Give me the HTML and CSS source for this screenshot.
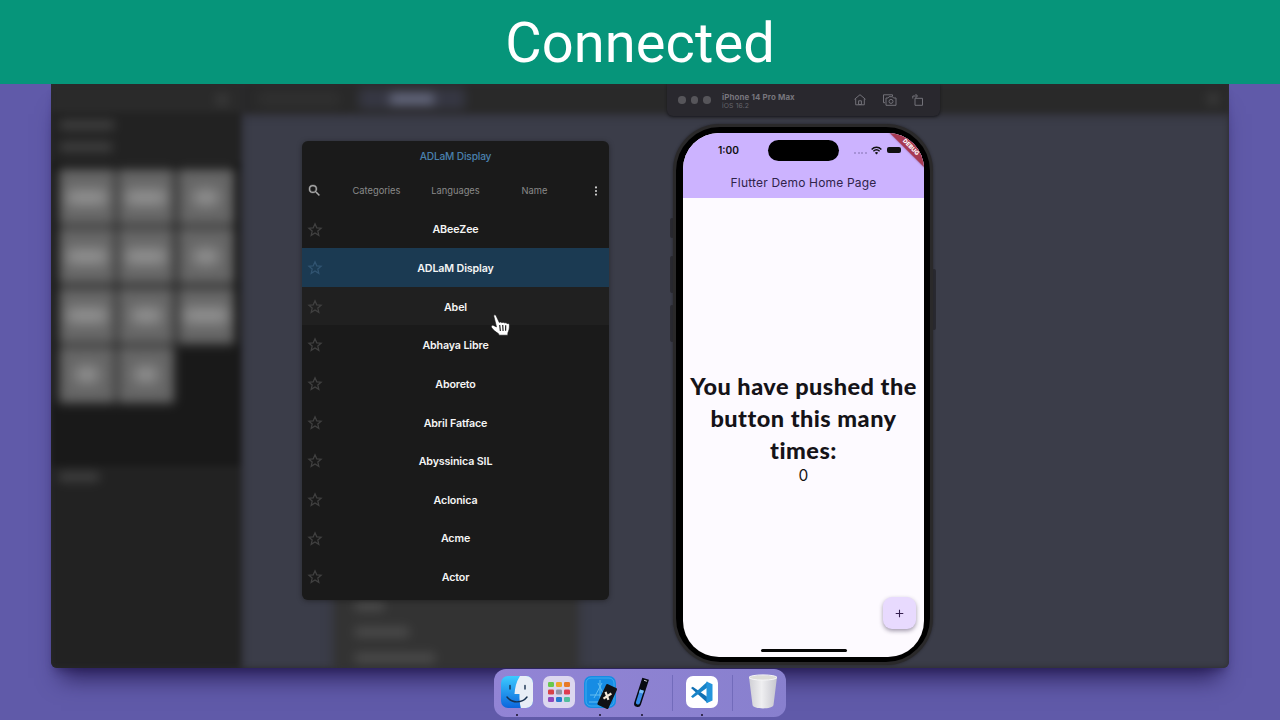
FILE: index.html
```html
<!DOCTYPE html>
<html lang="en">
<head>
<meta charset="utf-8">
<title>Connected</title>
<link rel="stylesheet" href="styles.css">
</head>
<body>
<svg width="0" height="0" class="defs">
  <symbol id="star" viewBox="0 0 24 24"><path d="M12 2.800l2.800 6.500 7 .6-5.300 4.600 1.600 6.900-6.100-3.700-6.100 3.700 1.600-6.900L2.200 9.900l7-.6z" fill="none" stroke="currentColor" stroke-width="2"/></symbol>
</svg>
<header class="banner">Connected</header>
<main class="desktop">
  <section class="editor">
    <div class="backdrop">
      <aside class="sidebar">
        <div class="side-top"><i class="smudge side-icon"></i></div>
        <div class="side-sections"><i class="smudge"></i><i class="smudge"></i></div>
        <div class="tile-panel">
          <div class="tiles">
            <i class="w40"></i><i class="w40"></i><i class="w24"></i>
            <i class="w40"></i><i class="w40"></i><i class="w24"></i>
            <i class="w40"></i><i class="w28"></i><i class="w44"></i>
            <i class="w22"></i><i class="w22"></i>
          </div>
        </div>
        <div class="side-bottom"><i class="smudge"></i></div>
      </aside>
      <div class="workspace">
        <div class="tabs"><i class="tab"></i><i class="tab active"></i><i class="smudge tab-end"></i></div>
        <div class="menu"><i class="smudge m1"></i><i class="smudge m2"></i><i class="smudge m3"></i></div>
      </div>
    </div>
  </section>

  <section class="fonts">
    <div class="current">ADLaM Display</div>
    <nav class="filters">
      <svg class="search" viewBox="0 0 24 24"><path d="M15.500 14h-.79l-.28-.27A6.470 6.470 0 0 0 16 9.500 6.500 6.500 0 1 0 9.500 16c1.610 0 3.090-.59 4.230-1.570l.27.28v.79l5 4.990L20.490 19zm-6 0a4.500 4.500 0 1 1 0-9 4.500 4.500 0 0 1 0 9z" fill="currentColor" stroke="currentColor" stroke-width=".5"/></svg>
      <span>Categories</span><span>Languages</span><span>Name</span>
      <svg class="more" viewBox="0 0 12 12"><g fill="currentColor"><circle cx="6" cy="1.700" r="1.300"/><circle cx="6" cy="6" r="1.300"/><circle cx="6" cy="10.300" r="1.300"/></g></svg>
    </nav>
    <ul class="list">
      <li><svg><use href="#star"/></svg>ABeeZee</li>
      <li class="selected"><svg><use href="#star"/></svg>ADLaM Display</li>
      <li class="hover"><svg><use href="#star"/></svg>Abel</li>
      <li><svg><use href="#star"/></svg>Abhaya Libre</li>
      <li><svg><use href="#star"/></svg>Aboreto</li>
      <li><svg><use href="#star"/></svg>Abril Fatface</li>
      <li><svg><use href="#star"/></svg>Abyssinica SIL</li>
      <li><svg><use href="#star"/></svg>Aclonica</li>
      <li><svg><use href="#star"/></svg>Acme</li>
      <li><svg><use href="#star"/></svg>Actor</li>
    </ul>
  </section>

  <svg class="pointer" viewBox="0 0 19 22"><path d="M2.800 2.200C2.500.9 4.300.3 5 1.500l3.300 7c.8-.8 2.100-.6 2.600.3.700-.8 2.200-.7 2.700.3.800-.7 2.200-.4 2.500.6 1-.5 2.200-.2 2.300 1.100.1 3.200-.3 5.700-1.500 8l-.1 2.400H8l-.5-1.500C5 18 2.500 16.500.6 13.600c-.9-1.500.4-2.800 1.900-2.200l3 1.500z" fill="#fff" stroke="#111" stroke-width=".6"/><path d="M8.700 11l.7 6M11.700 11l.4 6M14.700 11.300l-.1 5.500" stroke="#222" stroke-width="1.200" fill="none"/></svg>

  <section class="simbar">
    <div class="lights"><i></i><i></i><i></i></div>
    <div class="device"><b>iPhone 14 Pro Max</b><span>iOS 16.2</span></div>
    <svg viewBox="0 0 14 14"><path d="M1.500 6.300L7 1.700l5.500 4.600M2.700 5.800v6h8.600v-6M5.600 11.500V7.800h2.800v3.700z"/></svg>
    <svg class="shot" viewBox="0 0 16 14"><path d="M3 9.700H1.500V1.800h9v1.500M4 5h2l1-1.300h3.500L11.500 5H14v7.300H4z"/><circle cx="9" cy="8.400" r="2"/></svg>
    <svg viewBox="0 0 14 14"><path d="M4 5.300h7.500v7H4zM1.800 5.500V3h4M4.500 1l2 2-2 2"/></svg>
  </section>

  <section class="phone">
    <i class="key k1"></i><i class="key k2"></i><i class="key k3"></i><i class="key k4"></i>
    <div class="bezel">
      <div class="screen">
        <div class="appbar">
          <div class="status">
            <b>1:00</b><i class="island"></i>
            <div class="signals">
              <span class="dots"><i></i><i></i><i></i><i></i></span>
              <svg viewBox="0 0 12 9"><g fill="none" stroke="#111" stroke-width="1.600"><path d="M.7 3.300c3-3 7.600-3 10.600 0M2.600 5.300c2-1.900 4.800-1.900 6.800 0"/></g><path d="M4.200 6.900c1-.9 2.600-.9 3.600 0L6 8.800z" fill="#111"/></svg>
              <i class="battery"></i>
            </div>
          </div>
          <div class="title">Flutter Demo Home Page</div>
          <div class="ribbon">DEBUG</div>
        </div>
        <div class="body">
          <p class="message">You have pushed the<br>button this many<br>times:</p>
          <p class="count">0</p>
        </div>
        <div class="foot">
          <div class="fab"><svg viewBox="0 0 10 10"><path d="M5 .8v8.400M.8 5h8.400" stroke="#35204f" stroke-width="1.200"/></svg></div>
          <i class="home"></i>
        </div>
      </div>
    </div>
  </section>

  <section class="dock">
    <div class="app running">
      <svg viewBox="0 0 32 32"><defs><linearGradient id="fb" x2="0" y2="1"><stop stop-color="#3ccbff"/><stop offset="1" stop-color="#0b65dc"/></linearGradient><clipPath id="fc"><rect width="32" height="32" rx="7"/></clipPath></defs><g clip-path="url(#fc)"><rect width="32" height="32" fill="url(#fb)"/><path d="M19 0C15 6 14 12 13.500 18h5c-.2 5 .2 9 1.300 14H32V0z" fill="#e8eef6"/></g><path d="M9 9.500v3.500M24 9.500v3.500M6 21c5 6.500 15 6.500 20 0" fill="none" stroke="#16304e" stroke-width="1.400" stroke-linecap="round"/></svg>
    </div>
    <div class="app">
      <svg viewBox="0 0 32 32"><rect width="32" height="32" rx="7" fill="#dcd7ef"/><g><rect x="5" y="6" width="6" height="5" rx="1.300" fill="#68c84e"/><rect x="13" y="6" width="6" height="5" rx="1.300" fill="#efa52d"/><rect x="21" y="6" width="6" height="5" rx="1.300" fill="#e77928"/><rect x="5" y="13.500" width="6" height="5" rx="1.300" fill="#d74348"/><rect x="13" y="13.500" width="6" height="5" rx="1.300" fill="#9293a5"/><rect x="21" y="13.500" width="6" height="5" rx="1.300" fill="#df3d52"/><rect x="5" y="21" width="6" height="5" rx="1.300" fill="#8f48bd"/><rect x="13" y="21" width="6" height="5" rx="1.300" fill="#247bd0"/><rect x="21" y="21" width="6" height="5" rx="1.300" fill="#52bf9d"/></g></svg>
    </div>
    <div class="app running">
      <svg viewBox="0 0 32 32"><rect width="32" height="32" rx="7" fill="#168ce4"/><rect x="2" y="2" width="28" height="28" rx="5" fill="none" stroke="#50b8f5" stroke-width=".7"/><path d="M10 22L18 7M14 7l8 16M6 19h18M5 26h16M16 4v24" stroke="#62bdf0" stroke-width="1" fill="none"/><g transform="rotate(25 23 21)"><rect x="17" y="9" width="12" height="23" rx="1.500" fill="#101216"/><path d="M19.500 17l6 6M25.500 16l-5 8" stroke="#f4e8d8" stroke-width="2.200"/></g></svg>
    </div>
    <div class="app running">
      <svg viewBox="0 0 32 32"><g transform="rotate(18 15 17)"><path d="M11.500 2h7v26a3.500 3.500 0 0 1-7 0z" fill="#080b12"/><path d="M13 14h4v13a2 2 0 0 1-4 0z" fill="#388be5"/><path d="M13 14h4v3h-4z" fill="#7ec0f6"/><path d="M14 4h3" stroke="#dcdce4" stroke-width=".9"/></g></svg>
    </div>
    <i class="rule r1"></i>
    <div class="app running">
      <svg viewBox="0 0 32 32"><rect width="32" height="32" rx="7" fill="#fff"/><path d="M5 12l1.800-1.300L21.500 21v6z" fill="#1070b3"/><path d="M5 20.500l1.800 1.500L21.500 11.500v-6z" fill="#1884c8"/><path d="M20.500 5.500l6 2.700v16.300l-6 2.700z" fill="#2495dc"/></svg>
    </div>
    <i class="rule r2"></i>
    <div class="app trash">
      <svg viewBox="0 0 32 36"><defs><linearGradient id="tg"><stop stop-color="#cfcfd4"/><stop offset=".45" stop-color="#efeff1"/><stop offset="1" stop-color="#c6c6ce"/></linearGradient></defs><path d="M2 3l3.500 28c.5 4.500 20.500 4.500 21 0L30 3z" fill="url(#tg)"/><ellipse cx="16" cy="3.500" rx="14" ry="2.600" fill="#deded9" stroke="#f5f5f7"/></svg>
    </div>
  </section>
</main>
</body>
</html>
```
FILE: styles.css
```css
* { box-sizing: border-box; }
body { margin: 0; width: 1280px; height: 720px; overflow: hidden; display: flex; flex-direction: column; background: #605aa9; font-family: Inter, "Liberation Sans", sans-serif; }
p, ul { margin: 0; padding: 0; }
i { display: block; }
svg { display: block; }
.defs { position: absolute; }
.banner { height: 84px; flex: none; background: #06957a; color: #fff; font: 400 56px/86px Roboto, sans-serif; letter-spacing: .1px; text-align: center; position: relative; z-index: 5; }
.desktop { position: relative; flex: 1; background: #605aa9; }

.editor { width: 1178px; height: 584px; margin: 0 auto; border-radius: 0 0 6px 6px; overflow: hidden; background: #2a2a2d; box-shadow: 0 20px 22px -10px rgba(25, 15, 65, .75), 0 6px 8px -4px rgba(25, 15, 65, .4); }
.backdrop { height: 584px; display: flex; background: #3b3d49; filter: blur(3px); }
.sidebar { width: 190px; display: flex; flex-direction: column; position: relative; z-index: 1; box-shadow: 0 0 6px 1px #2a2a30; background: #222; }
.side-top { height: 28px; background: #2a2a2a; padding: 10px 13px; display: flex; justify-content: flex-end; }
.smudge { background: #5a5a5a; filter: blur(4px); opacity: .65; }
.side-icon { width: 12px; height: 11px; opacity: .35; }
.side-sections { height: 51px; padding: 9px 9px; display: flex; flex-direction: column; gap: 14px; }
.side-sections .smudge { width: 54px; height: 8px; }
.side-sections .smudge:last-child { width: 52px; }
.tile-panel { height: 303px; background: #191919; padding: 6px 8px; }
.tiles { display: grid; grid-template-columns: repeat(3, 56px); grid-auto-rows: 56px; gap: 3.300px; filter: blur(4px); }
.tiles i { background: #666; display: flex; align-items: center; justify-content: center; }
.tiles i::before { content: ""; height: 15px; width: 40px; background: #949494; filter: blur(4px); }
.tiles .w22::before { width: 22px; }
.tiles .w24::before { width: 24px; }
.tiles .w28::before { width: 29px; }
.tiles .w44::before { width: 44px; }
.side-bottom { padding: 7px 8px; }
.side-bottom .smudge { width: 40px; height: 8px; }
.workspace { flex: 1; display: flex; flex-direction: column; justify-content: space-between; }
.tabs { height: 29px; background: #292929; box-shadow: 0 1px 6px 2px #302f36; display: flex; align-items: center; padding: 0 10px 0 18px; }
.tab { width: 80px; height: 14px; margin-right: 20px; background: #303030; filter: blur(4px); }
.tab.active { width: 106px; height: 21px; background: #363743; display: flex; align-items: center; justify-content: center; }
.tab.active::before { content: ""; width: 44px; height: 10px; background: #6a6e84; }
.tab-end { width: 12px; height: 12px; margin-left: auto; opacity: .35; }
.menu { width: 240px; height: 90px; margin-left: 95px; background: #333; box-shadow: 0 0 8px 4px #353539; padding: 23px 19px; display: flex; flex-direction: column; gap: 16px; }
.menu .smudge { height: 10px; flex: none; }
.m1 { width: 29px; }
.m2 { width: 54px; }
.m3 { width: 80px; }

.fonts { position: absolute; left: 302px; top: 57px; width: 307px; height: 459px; background: #1a1a1a; border-radius: 6px; overflow: hidden; box-shadow: 0 1px 5px rgba(20, 20, 20, .5); }
.current { height: 31px; line-height: 31px; text-align: center; font-size: 10.200px; font-weight: 500; color: #4a81ae; letter-spacing: -.18px; }
.filters { height: 37px; display: grid; grid-template-columns: 35px 79px 79px 79px 35px; align-items: center; text-align: center; color: #8a8a8a; font-size: 9.300px; }
.search { width: 15px; height: 15px; margin-left: 5px; color: #aaa; }
.more { width: 12px; height: 10px; margin-left: 16px; color: #ccc; }
.list { list-style: none; padding-top: .5px; }
.list li { position: relative; height: 38.650px; padding-top: 2px; display: flex; align-items: center; justify-content: center; color: #f5f5f5; font-size: 10.700px; font-weight: 600; letter-spacing: -.14px; }
.list svg { position: absolute; left: 5px; top: 12px; width: 16px; height: 15px; color: #404040; }
.list .selected { background: #1b3a52; }
.list .selected svg { color: #315471; }
.list .hover { background: #202020; }
.pointer { position: absolute; left: 491px; top: 230px; width: 19px; height: 22px; z-index: 3; }

.simbar { position: absolute; left: 667px; top: 0; width: 273px; height: 32px; border-radius: 0 0 6px 6px; background: #29282e; box-shadow: 0 1px 3px #17171c; display: flex; align-items: center; padding: 0 15px 0 11px; color: #77767d; }
.simbar svg { width: 14px; height: 14px; fill: none; stroke: #727178; stroke-width: 1; }
.simbar svg.shot { width: 16px; height: 14px; margin: 0 13px 0 15px; }
.lights { display: flex; gap: 5px; width: 44px; }
.lights i { width: 7.500px; height: 7.500px; border-radius: 50%; background: #56555a; }
.device { flex: 1; font-size: 7.900px; line-height: 9px; padding-top: 2px; display: flex; flex-direction: column; letter-spacing: .14px; }
.device span { font-size: 6.800px; line-height: 8px; color: #66656c; }

.phone { position: absolute; left: 673px; top: 40px; width: 260px; height: 541px; }
.bezel { position: relative; height: 541px; border-radius: 47px; border: 3px solid #2a292a; background: #000; padding: 6px 6px 5px 7px; box-shadow: 0 0 3px #232329; display: flex; }
.key { position: absolute; width: 4px; background: #2a2a31; border-radius: 2px; }
.k1 { left: -3px; top: 94px; height: 20px; }
.k2 { left: -3px; top: 132px; height: 37px; }
.k3 { left: -3px; top: 181px; height: 37px; }
.k4 { right: -3px; top: 145px; height: 61px; }
.screen { position: relative; flex: 1; border-radius: 36px; overflow: hidden; background: #fdfaff; display: flex; flex-direction: column; color: #111; }
.appbar { position: relative; height: 65px; background: #ccb3ff; overflow: hidden; }
.status { height: 34px; display: grid; grid-template-columns: 85px 71px 1fr; align-items: center; }
.status b { font-size: 10.200px; font-weight: 600; padding-left: 35px; }
.island { height: 21px; background: #000; border-radius: 11px; }
.signals { display: flex; align-items: center; padding-left: 15px; }
.dots { display: flex; gap: 1.500px; width: 17px; padding-top: 5px; }
.dots i { width: 2px; height: 2px; background: #9b87ca; border-radius: 50%; }
.signals svg { width: 11px; height: 9px; }
.battery { width: 14px; height: 6px; margin-left: 5px; border-radius: 2px; background: #111; }
.title { text-align: center; font-size: 12px; line-height: 32px; letter-spacing: .18px; color: #30234a; }
.ribbon { position: absolute; right: -26.500px; top: 8.500px; width: 80px; height: 10px; transform: rotate(45deg); background: #a83a52; color: #fff; font-size: 5.800px; line-height: 10px; font-weight: 800; text-align: center; box-shadow: 0 0 2px #8b4b79; }
.body { flex: 1; padding-top: 172px; text-align: center; }
.message { font: 900 23.500px/32px Lato, sans-serif; letter-spacing: .48px; color: #151318; white-space: nowrap; }
.count { font-size: 15.500px; line-height: 20px; }
.foot { height: 60px; display: flex; flex-direction: column; align-items: flex-end; padding: 0 8px; }
.fab { width: 33px; height: 32px; background: #e8dafe; border-radius: 9px; box-shadow: 0 2px 4px rgba(50, 35, 70, .45); display: flex; align-items: center; justify-content: center; }
.fab svg { width: 9px; height: 9px; }
.home { width: 86px; height: 2.500px; border-radius: 2px; background: #050505; margin: 20px auto 0; }

.dock { position: absolute; left: 494px; top: 585px; width: 292px; height: 48px; border-radius: 12px; background: linear-gradient(100deg, #9284d5, #8880ce); display: flex; padding: 7px 7px 0; z-index: 4; }
.app { position: relative; width: 32px; margin-right: 9.700px; }
.app svg { width: 32px; height: 32px; overflow: visible; }
.app.running::after { content: ""; position: absolute; left: 14.500px; top: 37.500px; width: 2.500px; height: 2.500px; border-radius: 50%; background: #171129; }
.rule { width: 1px; height: 36px; background: #726bbb; margin: -1px 14px 0 4px; }
.rule.r2 { margin-left: 4.500px; margin-right: 14px; }
.trash { margin: 0; }
.trash svg { height: 36px; margin-top: -2px; }
```
